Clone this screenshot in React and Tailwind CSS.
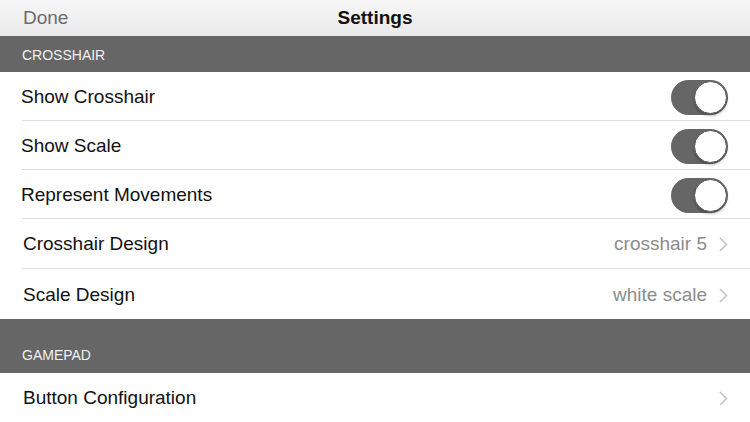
import React from 'react';

const font = { fontFamily: '"Liberation Sans", Arial, sans-serif' };

function Toggle() {
    return (
        <div className="relative w-[57px] h-[35px] rounded-full bg-[#666666] shrink-0">
            <div className="absolute right-[1px] top-[1px] w-[33px] h-[33px] rounded-full bg-white border border-[#555] shadow-[0_2px_3px_rgba(0,0,0,0.25)]"></div>
        </div>
    );
}

function Chevron() {
    return (
        <svg width="9" height="15" viewBox="0 0 9 15" className="shrink-0">
            <path d="M1 1 L7.5 7.5 L1 14" fill="none" stroke="#c4c4c8" strokeWidth="1.6" />
        </svg>
    );
}

function Row({ label, detail, toggle, height = 'h-[49px]', last, pl = 'pl-[21px]' }) {
    return (
        <div className={`flex items-stretch bg-white ${height}`}>
            <div className={`flex flex-1 items-center ml-[22px] pr-[22px] pt-[2px] ${last ? '' : 'border-b border-[#dedede]'}`}>
                <span className={`flex-1 text-[19px] text-[#111] -ml-[22px] ${pl}`}>{label}</span>
                {toggle && <Toggle />}
                {!toggle && (
                    <div className="flex items-center gap-[12px]">
                        {detail && <span className="text-[19px] text-[#8c8c8c]">{detail}</span>}
                        <Chevron />
                    </div>
                )}
            </div>
        </div>
    );
}

export default function App() {
    return (
        <div className="w-[750px] h-[422px] overflow-hidden bg-white" style={font}>
            <div className="relative flex items-center justify-center h-[36px] bg-gradient-to-b from-[#f7f7f7] to-[#e9e9e9]">
                <span className="absolute left-[23px] text-[19px] text-[#6c6c6c]">Done</span>
                <span className="text-[19px] font-bold text-[#111]">Settings</span>
            </div>
            <div className="flex items-center h-[36px] bg-[#666666] px-[22px] pt-[3px] text-[14px] text-[#f0f0f0]">
                CROSSHAIR
            </div>
            <Row label="Show Crosshair" toggle />
            <Row label="Show Scale" toggle />
            <Row label="Represent Movements" toggle />
            <Row label="Crosshair Design" detail="crosshair 5" height="h-[50px]" pl="pl-[23px]" />
            <Row label="Scale Design" detail="white scale" height="h-[50px]" pl="pl-[23px]" last />
            <div className="flex items-end h-[54px] bg-[#666666] px-[22px] pb-[7px] text-[14px] text-[#f0f0f0]">
                GAMEPAD
            </div>
            <Row label="Button Configuration" height="h-[49px]" pl="pl-[23px]" last />
        </div>
    );
}
